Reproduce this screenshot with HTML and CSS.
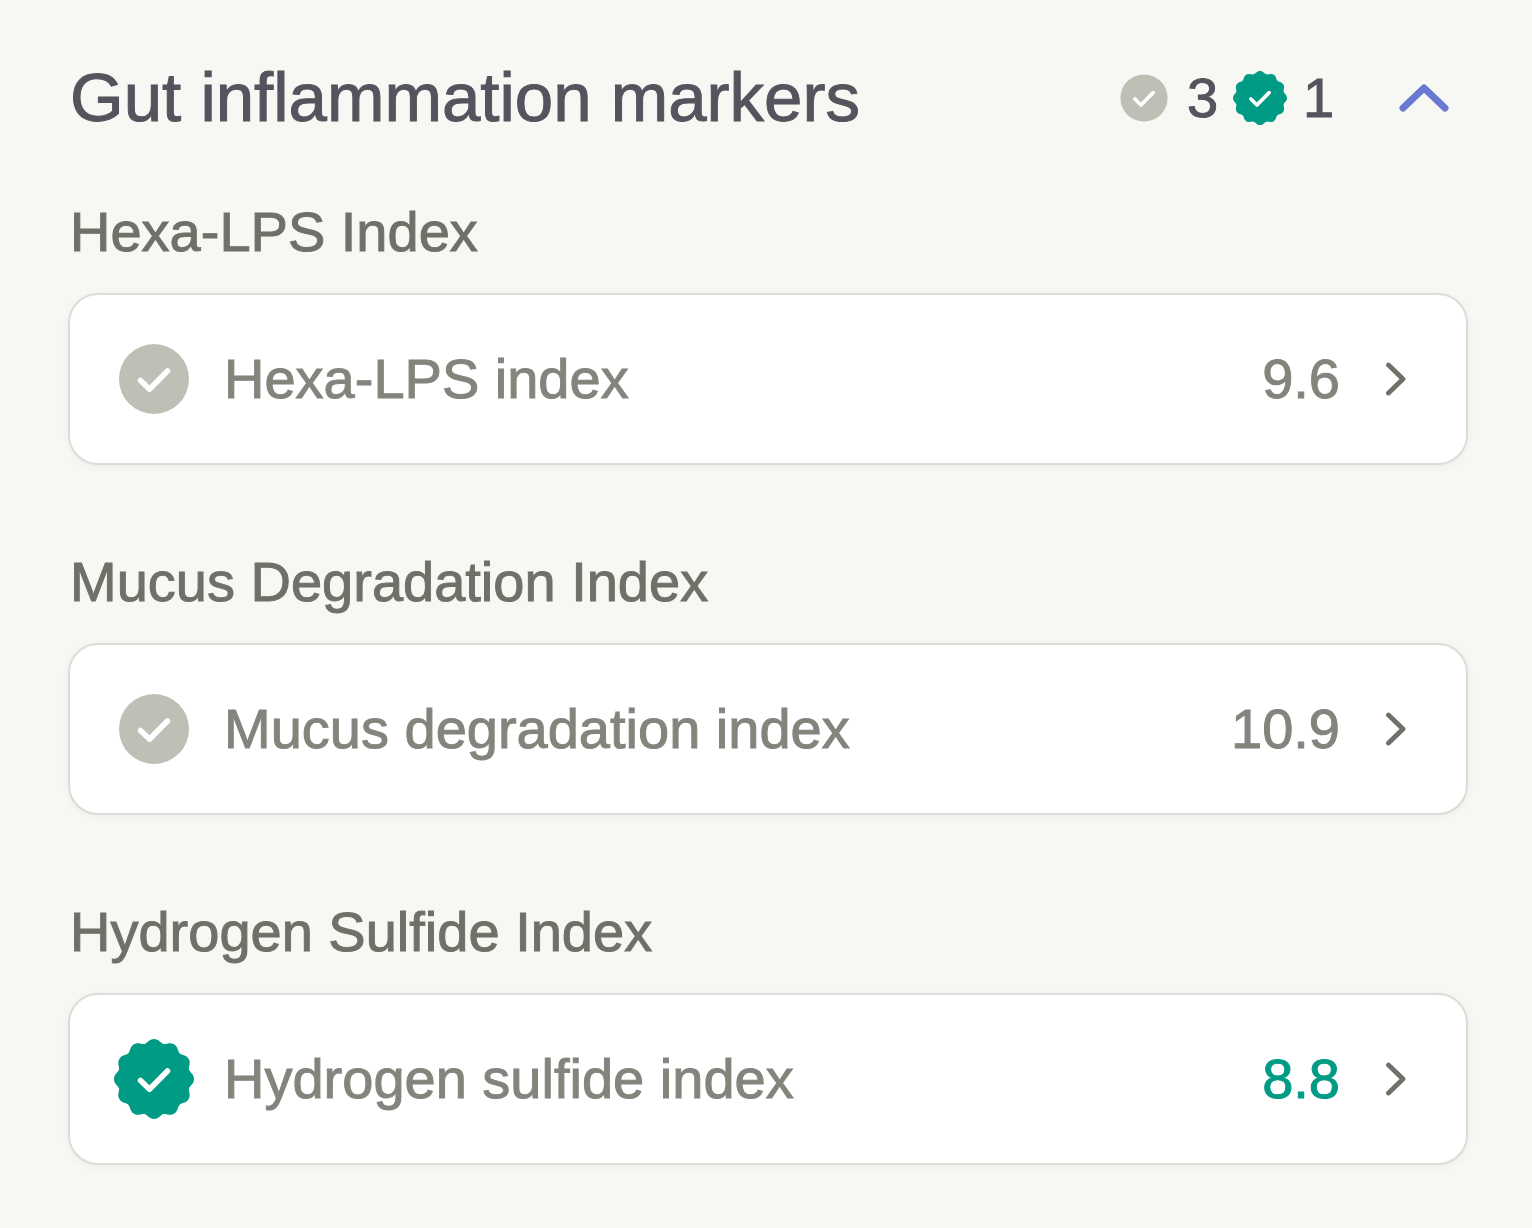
FILE: index.html
```html
<!DOCTYPE html>
<html lang="en">
<head>
<meta charset="utf-8">
<meta name="viewport" content="width=device-width, initial-scale=1">
<title>Gut inflammation markers</title>
<link rel="stylesheet" href="styles.css">
</head>
<body>
<svg class="sprite" aria-hidden="true">
  <symbol id="normal" viewBox="-40 -40 80 80">
    <circle r="35" fill="#bebfb5"/>
    <path class="tick" d="M-13.500 1.500L-4.500 10.300L13.500 -8"/>
  </symbol>
  <symbol id="optimal" viewBox="-40 -40 80 80">
    <g fill="#009b84">
      <circle r="36"/>
      <path id="lobe" d="M0 0L-9.400 -35.060C-6.500 -35.840 -5 -40 0 -40C5 -40 6.500 -35.840 9.400 -35.060Z"/>
      <use href="#lobe" transform="rotate(30)"/>
      <use href="#lobe" transform="rotate(60)"/>
      <use href="#lobe" transform="rotate(90)"/>
      <use href="#lobe" transform="rotate(120)"/>
      <use href="#lobe" transform="rotate(150)"/>
      <use href="#lobe" transform="rotate(180)"/>
      <use href="#lobe" transform="rotate(210)"/>
      <use href="#lobe" transform="rotate(240)"/>
      <use href="#lobe" transform="rotate(270)"/>
      <use href="#lobe" transform="rotate(300)"/>
      <use href="#lobe" transform="rotate(330)"/>
    </g>
    <path class="tick" d="M-13.500 1.500L-4.500 10.300L13.500 -8"/>
  </symbol>
  <symbol id="next" viewBox="0 0 20 34">
    <path d="M2.500 3L17 17L2.500 31" fill="none" stroke="#6f7168" stroke-width="4.800" stroke-linecap="round" stroke-linejoin="round"/>
  </symbol>
</svg>
<main class="panel">
  <header class="panel-header">
    <h1 class="title">Gut inflammation markers</h1>
    <div class="summary">
      <svg class="badge-small" aria-label="Normal"><use href="#normal"/></svg>
      <span class="count">3</span>
      <svg class="badge-small" aria-label="Optimal"><use href="#optimal"/></svg>
      <span class="count">1</span>
    </div>
    <button class="toggle" type="button" aria-expanded="true" aria-label="Collapse section">
      <svg class="toggle-icon" viewBox="0 0 50 30"><path d="M4 25L25 5L46 25" fill="none" stroke="#6979d3" stroke-width="7" stroke-linecap="round" stroke-linejoin="round"/></svg>
    </button>
  </header>
  <section class="group">
    <h2 class="group-title">Hexa-LPS Index</h2>
    <a class="card" href="#hexa-lps">
      <svg class="badge" aria-hidden="true"><use href="#normal"/></svg>
      <span class="name">Hexa-LPS index</span>
      <span class="value">9.6</span>
      <svg class="next" aria-hidden="true"><use href="#next"/></svg>
    </a>
  </section>
  <section class="group">
    <h2 class="group-title">Mucus Degradation Index</h2>
    <a class="card" href="#mucus-degradation">
      <svg class="badge" aria-hidden="true"><use href="#normal"/></svg>
      <span class="name">Mucus degradation index</span>
      <span class="value">10.9</span>
      <svg class="next" aria-hidden="true"><use href="#next"/></svg>
    </a>
  </section>
  <section class="group">
    <h2 class="group-title">Hydrogen Sulfide Index</h2>
    <a class="card" href="#hydrogen-sulfide">
      <svg class="badge" aria-hidden="true"><use href="#optimal"/></svg>
      <span class="name">Hydrogen sulfide index</span>
      <span class="value value-optimal">8.8</span>
      <svg class="next" aria-hidden="true"><use href="#next"/></svg>
    </a>
  </section>
</main>
</body>
</html>
```
FILE: styles.css
```css
* { box-sizing: border-box; }
body {
  margin: 0;
  background: #f7f8f3;
  font-family: "Liberation Sans", Arial, sans-serif;
  font-size: 56px;
  line-height: 64px;
}
.sprite { position: absolute; width: 0; height: 0; }
.tick {
  fill: none;
  stroke: #fff;
  stroke-width: 5.5;
  stroke-linecap: round;
  stroke-linejoin: round;
}
.panel { padding: 58px 64px 64px 68px; }
.panel-header {
  display: flex;
  align-items: center;
  height: 80px;
  margin-bottom: 62px;
}
.title, .group-title, .count, .name, .value { -webkit-text-stroke: 1px currentColor; }
.title, .group-title { margin: 0; padding-left: 2px; font-weight: 400; }
.title { flex: 1; font-size: 69px; line-height: 80px; color: #55535d; }
.summary { display: flex; align-items: center; color: #55535d; }
.badge-small { width: 54px; height: 54px; }
.count { width: 62px; padding-left: 16px; }
.toggle {
  display: flex;
  margin: 0 19px 0 50px;
  padding: 0;
  border: 0;
  background: none;
  cursor: pointer;
}
.toggle-icon { width: 50px; height: 30px; }
.group { margin-bottom: 85px; }
.group:last-child { margin-bottom: 0; }
.group-title { margin-bottom: 29px; color: #6f7168; line-height: 64px; font-size: 56px; }
.card {
  display: flex;
  align-items: center;
  height: 172px;
  padding: 0 60px 0 44px;
  border: 2px solid #dcddd8;
  border-radius: 30px;
  background: #fff;
  box-shadow: 0 2px 6px rgba(80, 80, 60, 0.06);
  color: #83857d;
  text-decoration: none;
}
.badge { width: 80px; height: 80px; margin-right: 30px; }
.name { flex: 1; }
.value { margin-right: 46px; }
.value-optimal { color: #009b84; }
.next { width: 20px; height: 34px; }
```
